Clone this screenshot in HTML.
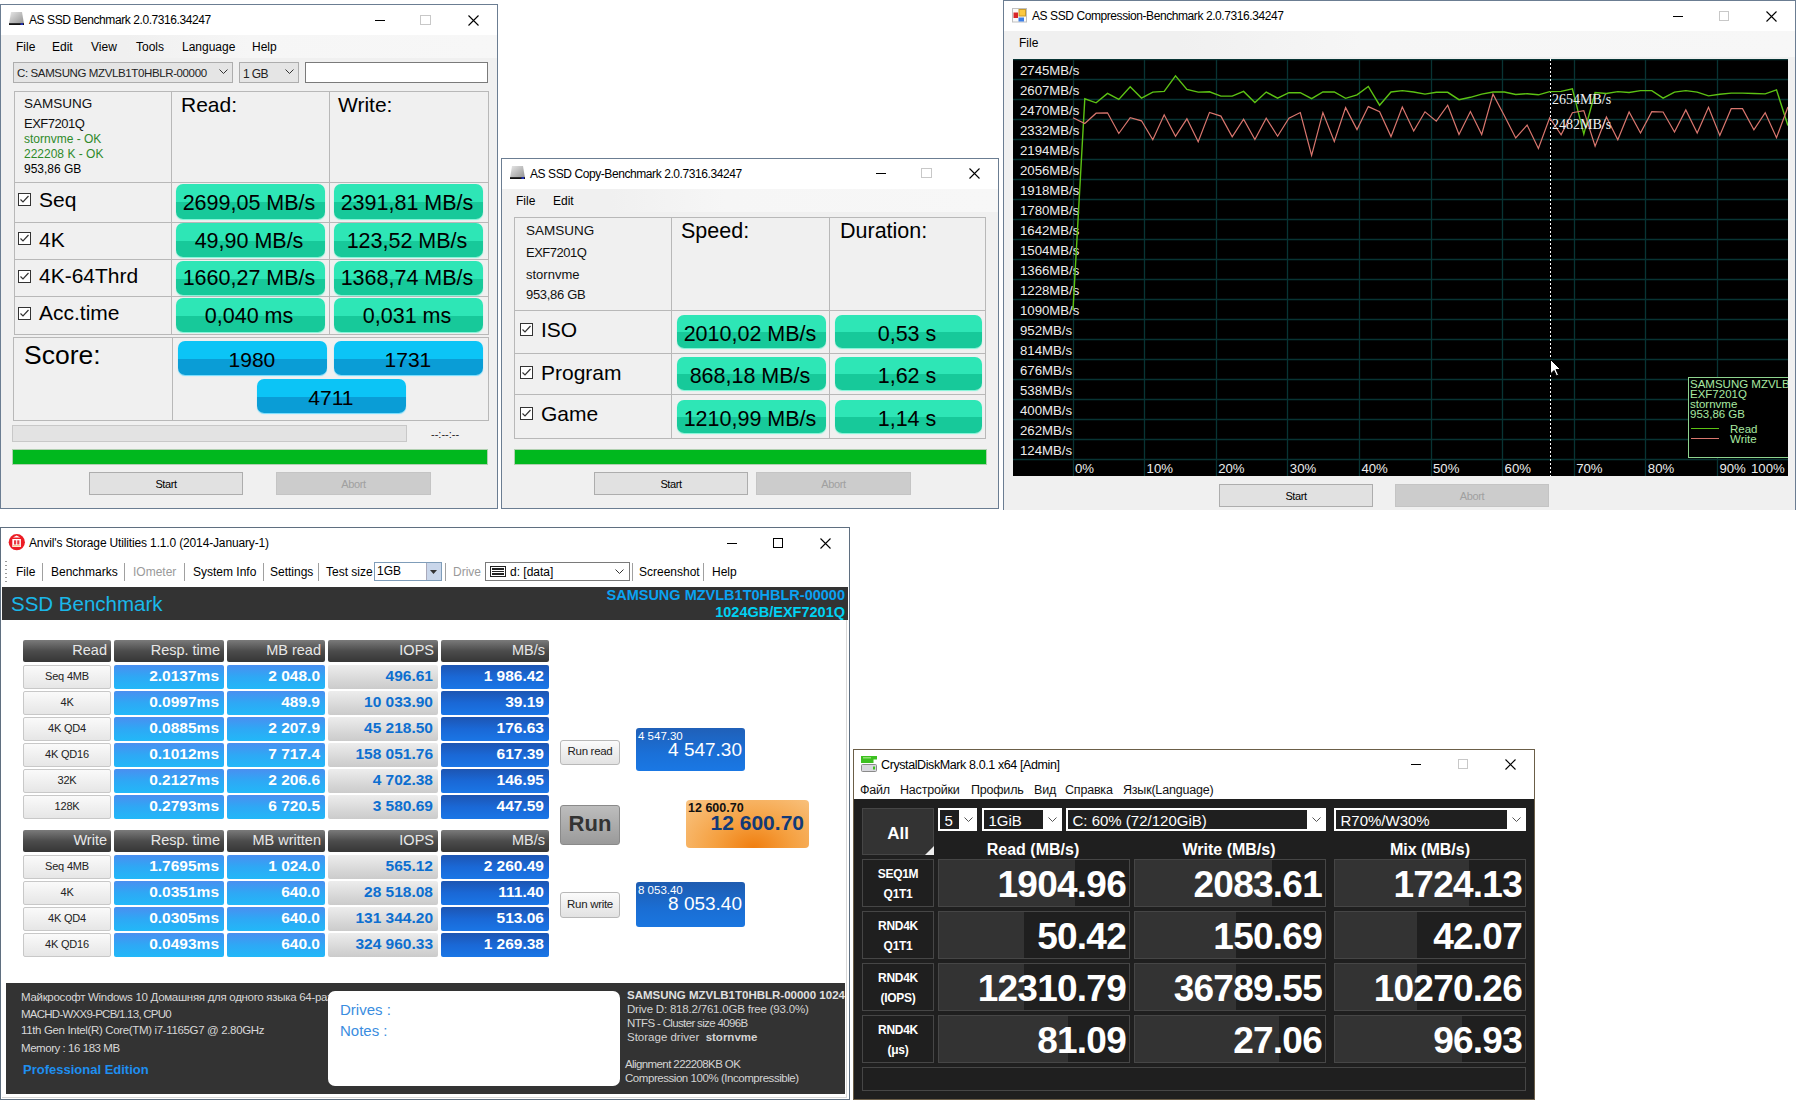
<!DOCTYPE html><html><head><meta charset="utf-8"><style>
html,body{margin:0;padding:0;background:#fff;font-family:"Liberation Sans",sans-serif;width:1796px;height:1100px;overflow:hidden;position:relative}
body div{position:absolute;box-sizing:border-box}
</style></head><body>
<div style="left:0px;top:4px;width:498px;height:505px;border:1px solid #6b7d92;background:#f0f0f0"></div>
<div style="left:1px;top:5px;width:496px;height:30px;background:#fff"></div>
<div style="left:1px;top:35px;width:496px;height:23px;background:linear-gradient(90deg,#f0f0f0 0,#f0f0f0 25%,#f6f6f6 50%,#f7f7f7 100%)"></div>
<svg style="position:absolute;left:9px;top:12px" width="16" height="14"><defs><linearGradient id="hd" x1="0" y1="0" x2="1" y2="1"><stop offset="0" stop-color="#e8e8e8"/><stop offset="1" stop-color="#909090"/></linearGradient></defs><path d="M2 0H13L15 12H0Z" fill="url(#hd)"/><rect x="0" y="11.2" width="15" height="1.8" fill="#111"/><rect x="11.5" y="11.2" width="2.5" height="1.8" fill="#2030c0"/></svg>
<div style="left:29px;top:13.84px;font-size:12px;line-height:12px;font-family:'Liberation Sans',sans-serif;white-space:nowrap;color:#000;letter-spacing:-0.42px">AS SSD Benchmark 2.0.7316.34247</div>
<div style="left:375px;top:19.5px;width:10px;height:1px;background:#000"></div>
<div style="left:420px;top:14.5px;width:11px;height:10px;border:1px solid #c8c8c8;box-sizing:border-box"></div>
<svg style="position:absolute;left:468px;top:14.5px" width="11" height="11"><path d="M0.5 0.5L10.5 10.5M10.5 0.5L0.5 10.5" stroke="#000" stroke-width="1.1"/></svg>
<div style="left:16px;top:40.84px;font-size:12px;line-height:12px;font-family:'Liberation Sans',sans-serif;white-space:nowrap;color:#000">File</div>
<div style="left:52px;top:40.84px;font-size:12px;line-height:12px;font-family:'Liberation Sans',sans-serif;white-space:nowrap;color:#000">Edit</div>
<div style="left:91px;top:40.84px;font-size:12px;line-height:12px;font-family:'Liberation Sans',sans-serif;white-space:nowrap;color:#000">View</div>
<div style="left:136px;top:40.84px;font-size:12px;line-height:12px;font-family:'Liberation Sans',sans-serif;white-space:nowrap;color:#000">Tools</div>
<div style="left:182px;top:40.84px;font-size:12px;line-height:12px;font-family:'Liberation Sans',sans-serif;white-space:nowrap;color:#000">Language</div>
<div style="left:252px;top:40.84px;font-size:12px;line-height:12px;font-family:'Liberation Sans',sans-serif;white-space:nowrap;color:#000">Help</div>
<div style="left:13px;top:62px;width:220px;height:21px;border:1px solid #adadad;background:#e5e5e5"></div>
<div style="left:17px;top:68.07px;font-size:11.5px;line-height:11.5px;font-family:'Liberation Sans',sans-serif;white-space:nowrap;color:#222;letter-spacing:-0.38px">C: SAMSUNG MZVLB1T0HBLR-00000</div>
<svg style="position:absolute;left:219px;top:69px" width="9" height="6"><path d="M0.5 0.5L4.5 4.5L8.5 0.5" stroke="#333" fill="none"/></svg>
<div style="left:239px;top:62px;width:60px;height:21px;border:1px solid #adadad;background:#e5e5e5"></div>
<div style="left:243px;top:67.64px;font-size:12px;line-height:12px;font-family:'Liberation Sans',sans-serif;white-space:nowrap;color:#222;letter-spacing:-0.6px">1 GB</div>
<svg style="position:absolute;left:285px;top:69px" width="9" height="6"><path d="M0.5 0.5L4.5 4.5L8.5 0.5" stroke="#333" fill="none"/></svg>
<div style="left:305px;top:62px;width:183px;height:21px;border:1px solid #7a7a7a;background:#fff"></div>
<div style="left:14px;top:91px;width:475px;height:244px;border:1px solid #b8b8b8"></div>
<div style="left:14px;top:182px;width:475px;height:1px;background:#b8b8b8"></div>
<div style="left:14px;top:222px;width:475px;height:1px;background:#b8b8b8"></div>
<div style="left:14px;top:259px;width:475px;height:1px;background:#b8b8b8"></div>
<div style="left:14px;top:296px;width:475px;height:1px;background:#b8b8b8"></div>
<div style="left:171px;top:91px;width:1px;height:244px;background:#b8b8b8"></div>
<div style="left:329px;top:91px;width:1px;height:244px;background:#b8b8b8"></div>
<div style="left:24px;top:96.57px;font-size:13.5px;line-height:13.5px;font-family:'Liberation Sans',sans-serif;white-space:nowrap;color:#111">SAMSUNG</div>
<div style="left:24px;top:117.00px;font-size:13px;line-height:13px;font-family:'Liberation Sans',sans-serif;white-space:nowrap;color:#111;letter-spacing:-0.5px">EXF7201Q</div>
<div style="left:24px;top:132.84px;font-size:12px;line-height:12px;font-family:'Liberation Sans',sans-serif;white-space:nowrap;color:#2f8a2a">stornvme - OK</div>
<div style="left:24px;top:147.84px;font-size:12px;line-height:12px;font-family:'Liberation Sans',sans-serif;white-space:nowrap;color:#2f8a2a">222208 K - OK</div>
<div style="left:24px;top:162.84px;font-size:12px;line-height:12px;font-family:'Liberation Sans',sans-serif;white-space:nowrap;">953,86 GB</div>
<div style="left:181px;top:94.22px;font-size:21px;line-height:21px;font-family:'Liberation Sans',sans-serif;white-space:nowrap;">Read:</div>
<div style="left:338px;top:94.22px;font-size:21px;line-height:21px;font-family:'Liberation Sans',sans-serif;white-space:nowrap;">Write:</div>
<svg style="position:absolute;left:18px;top:193px" width="13" height="13"><rect x="0.5" y="0.5" width="12" height="12" fill="#fff" stroke="#333"/><path d="M2.5 6.5L5 9L10.5 3" stroke="#333" stroke-width="1.2" fill="none"/></svg>
<div style="left:39px;top:189.22px;font-size:21px;line-height:21px;font-family:'Liberation Sans',sans-serif;white-space:nowrap;">Seq</div>
<div style="left:176px;top:184px;width:149px;height:35px;border-radius:7px;background:linear-gradient(#2ee6b6 0,#2ee6b6 52%,#17c99a 52%,#17c99a 100%);box-shadow:0 1px 1px #7cf5d6"></div>
<div style="left:154.5px;width:189px;top:193.20px;font-size:21.5px;line-height:21.5px;font-family:'Liberation Sans',sans-serif;white-space:nowrap;text-align:center;color:#000">2699,05 MB/s</div>
<div style="left:334px;top:184px;width:149px;height:35px;border-radius:7px;background:linear-gradient(#2ee6b6 0,#2ee6b6 52%,#17c99a 52%,#17c99a 100%);box-shadow:0 1px 1px #7cf5d6"></div>
<div style="left:312.5px;width:189px;top:193.20px;font-size:21.5px;line-height:21.5px;font-family:'Liberation Sans',sans-serif;white-space:nowrap;text-align:center;color:#000">2391,81 MB/s</div>
<svg style="position:absolute;left:18px;top:232px" width="13" height="13"><rect x="0.5" y="0.5" width="12" height="12" fill="#fff" stroke="#333"/><path d="M2.5 6.5L5 9L10.5 3" stroke="#333" stroke-width="1.2" fill="none"/></svg>
<div style="left:39px;top:229.22px;font-size:21px;line-height:21px;font-family:'Liberation Sans',sans-serif;white-space:nowrap;">4K</div>
<div style="left:176px;top:223px;width:149px;height:34px;border-radius:7px;background:linear-gradient(#2ee6b6 0,#2ee6b6 52%,#17c99a 52%,#17c99a 100%);box-shadow:0 1px 1px #7cf5d6"></div>
<div style="left:154.5px;width:189px;top:231.00px;font-size:21.5px;line-height:21.5px;font-family:'Liberation Sans',sans-serif;white-space:nowrap;text-align:center;color:#000">49,90 MB/s</div>
<div style="left:334px;top:223px;width:149px;height:34px;border-radius:7px;background:linear-gradient(#2ee6b6 0,#2ee6b6 52%,#17c99a 52%,#17c99a 100%);box-shadow:0 1px 1px #7cf5d6"></div>
<div style="left:312.5px;width:189px;top:231.00px;font-size:21.5px;line-height:21.5px;font-family:'Liberation Sans',sans-serif;white-space:nowrap;text-align:center;color:#000">123,52 MB/s</div>
<svg style="position:absolute;left:18px;top:270px" width="13" height="13"><rect x="0.5" y="0.5" width="12" height="12" fill="#fff" stroke="#333"/><path d="M2.5 6.5L5 9L10.5 3" stroke="#333" stroke-width="1.2" fill="none"/></svg>
<div style="left:39px;top:265.22px;font-size:21px;line-height:21px;font-family:'Liberation Sans',sans-serif;white-space:nowrap;">4K-64Thrd</div>
<div style="left:176px;top:261px;width:149px;height:34px;border-radius:7px;background:linear-gradient(#2ee6b6 0,#2ee6b6 52%,#17c99a 52%,#17c99a 100%);box-shadow:0 1px 1px #7cf5d6"></div>
<div style="left:154.5px;width:189px;top:268.10px;font-size:21.5px;line-height:21.5px;font-family:'Liberation Sans',sans-serif;white-space:nowrap;text-align:center;color:#000">1660,27 MB/s</div>
<div style="left:334px;top:261px;width:149px;height:34px;border-radius:7px;background:linear-gradient(#2ee6b6 0,#2ee6b6 52%,#17c99a 52%,#17c99a 100%);box-shadow:0 1px 1px #7cf5d6"></div>
<div style="left:312.5px;width:189px;top:268.10px;font-size:21.5px;line-height:21.5px;font-family:'Liberation Sans',sans-serif;white-space:nowrap;text-align:center;color:#000">1368,74 MB/s</div>
<svg style="position:absolute;left:18px;top:307px" width="13" height="13"><rect x="0.5" y="0.5" width="12" height="12" fill="#fff" stroke="#333"/><path d="M2.5 6.5L5 9L10.5 3" stroke="#333" stroke-width="1.2" fill="none"/></svg>
<div style="left:39px;top:302.22px;font-size:21px;line-height:21px;font-family:'Liberation Sans',sans-serif;white-space:nowrap;">Acc.time</div>
<div style="left:176px;top:298px;width:149px;height:34px;border-radius:7px;background:linear-gradient(#2ee6b6 0,#2ee6b6 52%,#17c99a 52%,#17c99a 100%);box-shadow:0 1px 1px #7cf5d6"></div>
<div style="left:154.5px;width:189px;top:305.50px;font-size:21.5px;line-height:21.5px;font-family:'Liberation Sans',sans-serif;white-space:nowrap;text-align:center;color:#000">0,040 ms</div>
<div style="left:334px;top:298px;width:149px;height:34px;border-radius:7px;background:linear-gradient(#2ee6b6 0,#2ee6b6 52%,#17c99a 52%,#17c99a 100%);box-shadow:0 1px 1px #7cf5d6"></div>
<div style="left:312.5px;width:189px;top:305.50px;font-size:21.5px;line-height:21.5px;font-family:'Liberation Sans',sans-serif;white-space:nowrap;text-align:center;color:#000">0,031 ms</div>
<div style="left:13px;top:337px;width:476px;height:84px;border:1px solid #b8b8b8"></div>
<div style="left:172px;top:337px;width:1px;height:84px;background:#b8b8b8"></div>
<div style="left:24px;top:341.57px;font-size:26.5px;line-height:26.5px;font-family:'Liberation Sans',sans-serif;white-space:nowrap;">Score:</div>
<div style="left:178px;top:341px;width:149px;height:34px;border-radius:7px;background:linear-gradient(#0cc4f6 0,#0cc4f6 52%,#0a9dd6 52%,#0a9dd6 100%);box-shadow:0 1px 1px #6fdcff"></div>
<div style="left:157.4px;width:189px;top:349.22px;font-size:21px;line-height:21px;font-family:'Liberation Sans',sans-serif;white-space:nowrap;text-align:center;color:#000">1980</div>
<div style="left:334px;top:341px;width:149px;height:34px;border-radius:7px;background:linear-gradient(#0cc4f6 0,#0cc4f6 52%,#0a9dd6 52%,#0a9dd6 100%);box-shadow:0 1px 1px #6fdcff"></div>
<div style="left:313.4px;width:189px;top:349.22px;font-size:21px;line-height:21px;font-family:'Liberation Sans',sans-serif;white-space:nowrap;text-align:center;color:#000">1731</div>
<div style="left:257px;top:379px;width:149px;height:34px;border-radius:7px;background:linear-gradient(#0cc4f6 0,#0cc4f6 52%,#0a9dd6 52%,#0a9dd6 100%);box-shadow:0 1px 1px #6fdcff"></div>
<div style="left:236.39999999999998px;width:189px;top:387.22px;font-size:21px;line-height:21px;font-family:'Liberation Sans',sans-serif;white-space:nowrap;text-align:center;color:#000">4711</div>
<div style="left:12px;top:425px;width:395px;height:17px;border:1px solid #c8c8c8;background:#e3e3e3"></div>
<div style="left:431px;top:428.69px;font-size:11px;line-height:11px;font-family:'Liberation Sans',sans-serif;white-space:nowrap;color:#222">--:--:--</div>
<div style="left:12px;top:449px;width:476px;height:16px;background:#00b81e;border:1px solid #b0d0b0"></div>
<div style="left:89px;top:472px;width:154px;height:23px;background:#e1e1e1;border:1px solid #adadad"></div>
<div style="left:89.0px;width:154px;top:478.69px;font-size:11px;line-height:11px;font-family:'Liberation Sans',sans-serif;white-space:nowrap;text-align:center;color:#000;letter-spacing:-0.4px">Start</div>
<div style="left:276px;top:472px;width:155px;height:23px;background:#cccccc;border:1px solid #c4c4c4"></div>
<div style="left:276.0px;width:155px;top:478.69px;font-size:11px;line-height:11px;font-family:'Liberation Sans',sans-serif;white-space:nowrap;text-align:center;color:#a0a0a0;letter-spacing:-0.4px">Abort</div>
<div style="left:501px;top:158px;width:498px;height:351px;border:1px solid #6b7d92;background:#f0f0f0"></div>
<div style="left:502px;top:159px;width:496px;height:30px;background:#fff"></div>
<div style="left:502px;top:189px;width:496px;height:23px;background:linear-gradient(90deg,#f0f0f0 0,#f0f0f0 22%,#f6f6f6 45%,#f7f7f7 100%)"></div>
<svg style="position:absolute;left:510px;top:166px" width="16" height="14"><path d="M2 0H13L15 12H0Z" fill="url(#hd)"/><rect x="0" y="11.2" width="15" height="1.8" fill="#111"/><rect x="11.5" y="11.2" width="2.5" height="1.8" fill="#2030c0"/></svg>
<div style="left:530px;top:167.84px;font-size:12px;line-height:12px;font-family:'Liberation Sans',sans-serif;white-space:nowrap;color:#000;letter-spacing:-0.42px">AS SSD Copy-Benchmark 2.0.7316.34247</div>
<div style="left:876px;top:173px;width:10px;height:1px;background:#000"></div>
<div style="left:921px;top:168px;width:11px;height:10px;border:1px solid #c8c8c8;box-sizing:border-box"></div>
<svg style="position:absolute;left:969px;top:168px" width="11" height="11"><path d="M0.5 0.5L10.5 10.5M10.5 0.5L0.5 10.5" stroke="#000" stroke-width="1.1"/></svg>
<div style="left:516px;top:194.84px;font-size:12px;line-height:12px;font-family:'Liberation Sans',sans-serif;white-space:nowrap;">File</div>
<div style="left:553px;top:194.84px;font-size:12px;line-height:12px;font-family:'Liberation Sans',sans-serif;white-space:nowrap;">Edit</div>
<div style="left:514px;top:217px;width:472px;height:222px;border:1px solid #b8b8b8"></div>
<div style="left:514px;top:310px;width:472px;height:1px;background:#b8b8b8"></div>
<div style="left:514px;top:353px;width:472px;height:1px;background:#b8b8b8"></div>
<div style="left:514px;top:394px;width:472px;height:1px;background:#b8b8b8"></div>
<div style="left:671px;top:217px;width:1px;height:222px;background:#b8b8b8"></div>
<div style="left:829px;top:217px;width:1px;height:222px;background:#b8b8b8"></div>
<div style="left:526px;top:223.57px;font-size:13.5px;line-height:13.5px;font-family:'Liberation Sans',sans-serif;white-space:nowrap;color:#111">SAMSUNG</div>
<div style="left:526px;top:246.00px;font-size:13px;line-height:13px;font-family:'Liberation Sans',sans-serif;white-space:nowrap;color:#111;letter-spacing:-0.5px">EXF7201Q</div>
<div style="left:526px;top:268.00px;font-size:13px;line-height:13px;font-family:'Liberation Sans',sans-serif;white-space:nowrap;color:#111">stornvme</div>
<div style="left:526px;top:288.00px;font-size:13px;line-height:13px;font-family:'Liberation Sans',sans-serif;white-space:nowrap;color:#111;letter-spacing:-0.3px">953,86 GB</div>
<div style="left:681px;top:220.80px;font-size:21.5px;line-height:21.5px;font-family:'Liberation Sans',sans-serif;white-space:nowrap;">Speed:</div>
<div style="left:840px;top:220.80px;font-size:21.5px;line-height:21.5px;font-family:'Liberation Sans',sans-serif;white-space:nowrap;">Duration:</div>
<svg style="position:absolute;left:520px;top:323px" width="13" height="13"><rect x="0.5" y="0.5" width="12" height="12" fill="#fff" stroke="#333"/><path d="M2.5 6.5L5 9L10.5 3" stroke="#333" stroke-width="1.2" fill="none"/></svg>
<div style="left:541px;top:319.22px;font-size:21px;line-height:21px;font-family:'Liberation Sans',sans-serif;white-space:nowrap;">ISO</div>
<div style="left:677px;top:315px;width:149px;height:33px;border-radius:7px;background:linear-gradient(#2ee6b6 0,#2ee6b6 52%,#17c99a 52%,#17c99a 100%);box-shadow:0 1px 1px #7cf5d6"></div>
<div style="left:655.5px;width:189px;top:324.20px;font-size:21.5px;line-height:21.5px;font-family:'Liberation Sans',sans-serif;white-space:nowrap;text-align:center;color:#000">2010,02 MB/s</div>
<div style="left:835px;top:315px;width:147px;height:33px;border-radius:7px;background:linear-gradient(#2ee6b6 0,#2ee6b6 52%,#17c99a 52%,#17c99a 100%);box-shadow:0 1px 1px #7cf5d6"></div>
<div style="left:813.5px;width:187px;top:324.20px;font-size:21.5px;line-height:21.5px;font-family:'Liberation Sans',sans-serif;white-space:nowrap;text-align:center;color:#000">0,53 s</div>
<svg style="position:absolute;left:520px;top:366px" width="13" height="13"><rect x="0.5" y="0.5" width="12" height="12" fill="#fff" stroke="#333"/><path d="M2.5 6.5L5 9L10.5 3" stroke="#333" stroke-width="1.2" fill="none"/></svg>
<div style="left:541px;top:362.22px;font-size:21px;line-height:21px;font-family:'Liberation Sans',sans-serif;white-space:nowrap;">Program</div>
<div style="left:677px;top:357px;width:149px;height:33px;border-radius:7px;background:linear-gradient(#2ee6b6 0,#2ee6b6 52%,#17c99a 52%,#17c99a 100%);box-shadow:0 1px 1px #7cf5d6"></div>
<div style="left:655.5px;width:189px;top:365.90px;font-size:21.5px;line-height:21.5px;font-family:'Liberation Sans',sans-serif;white-space:nowrap;text-align:center;color:#000">868,18 MB/s</div>
<div style="left:835px;top:357px;width:147px;height:33px;border-radius:7px;background:linear-gradient(#2ee6b6 0,#2ee6b6 52%,#17c99a 52%,#17c99a 100%);box-shadow:0 1px 1px #7cf5d6"></div>
<div style="left:813.5px;width:187px;top:365.90px;font-size:21.5px;line-height:21.5px;font-family:'Liberation Sans',sans-serif;white-space:nowrap;text-align:center;color:#000">1,62 s</div>
<svg style="position:absolute;left:520px;top:407px" width="13" height="13"><rect x="0.5" y="0.5" width="12" height="12" fill="#fff" stroke="#333"/><path d="M2.5 6.5L5 9L10.5 3" stroke="#333" stroke-width="1.2" fill="none"/></svg>
<div style="left:541px;top:403.22px;font-size:21px;line-height:21px;font-family:'Liberation Sans',sans-serif;white-space:nowrap;">Game</div>
<div style="left:677px;top:400px;width:149px;height:33px;border-radius:7px;background:linear-gradient(#2ee6b6 0,#2ee6b6 52%,#17c99a 52%,#17c99a 100%);box-shadow:0 1px 1px #7cf5d6"></div>
<div style="left:655.5px;width:189px;top:409.20px;font-size:21.5px;line-height:21.5px;font-family:'Liberation Sans',sans-serif;white-space:nowrap;text-align:center;color:#000">1210,99 MB/s</div>
<div style="left:835px;top:400px;width:147px;height:33px;border-radius:7px;background:linear-gradient(#2ee6b6 0,#2ee6b6 52%,#17c99a 52%,#17c99a 100%);box-shadow:0 1px 1px #7cf5d6"></div>
<div style="left:813.5px;width:187px;top:409.20px;font-size:21.5px;line-height:21.5px;font-family:'Liberation Sans',sans-serif;white-space:nowrap;text-align:center;color:#000">1,14 s</div>
<div style="left:514px;top:449px;width:473px;height:16px;background:#00b81e;border:1px solid #b0d0b0"></div>
<div style="left:594px;top:472px;width:154px;height:23px;background:#e1e1e1;border:1px solid #adadad"></div>
<div style="left:594.0px;width:154px;top:478.69px;font-size:11px;line-height:11px;font-family:'Liberation Sans',sans-serif;white-space:nowrap;text-align:center;color:#000;letter-spacing:-0.4px">Start</div>
<div style="left:756px;top:472px;width:155px;height:23px;background:#cccccc;border:1px solid #c4c4c4"></div>
<div style="left:756.0px;width:155px;top:478.69px;font-size:11px;line-height:11px;font-family:'Liberation Sans',sans-serif;white-space:nowrap;text-align:center;color:#a0a0a0;letter-spacing:-0.4px">Abort</div>
<div style="left:1003px;top:0px;width:793px;height:510px;border:1px solid #6b7d92;border-bottom:none;background:#f0f0f0"></div>
<div style="left:1004px;top:1px;width:791px;height:30px;background:#fff"></div>
<div style="left:1004px;top:31px;width:791px;height:26px;background:linear-gradient(90deg,#f0f0f0 0,#f0f0f0 22%,#f6f6f6 45%,#f7f7f7 100%)"></div>
<svg style="position:absolute;left:1012px;top:8px" width="15" height="15"><rect x="0.5" y="0.5" width="14" height="13.5" fill="#fafafa" stroke="#c0c0c0"/><rect x="1.5" y="4.5" width="4.5" height="5.5" fill="#d8262a"/><rect x="6.5" y="1" width="7.5" height="7.5" fill="#c89a2a"/><rect x="7.5" y="2" width="5.5" height="5.5" fill="#fcc840"/><rect x="6.5" y="9.5" width="5.5" height="4" fill="#3d7fe6"/></svg>
<div style="left:1032px;top:9.84px;font-size:12px;line-height:12px;font-family:'Liberation Sans',sans-serif;white-space:nowrap;color:#000;letter-spacing:-0.42px">AS SSD Compression-Benchmark 2.0.7316.34247</div>
<div style="left:1673px;top:15.5px;width:10px;height:1px;background:#000"></div>
<div style="left:1719px;top:10.5px;width:10px;height:10px;border:1px solid #c8c8c8;box-sizing:border-box"></div>
<svg style="position:absolute;left:1766px;top:10.5px" width="11" height="11"><path d="M0.5 0.5L10.5 10.5M10.5 0.5L0.5 10.5" stroke="#000" stroke-width="1.1"/></svg>
<div style="left:1019px;top:36.84px;font-size:12px;line-height:12px;font-family:'Liberation Sans',sans-serif;white-space:nowrap;">File</div>
<div style="left:1013px;top:59px;width:775px;height:417px;background:#000"></div>
<svg style="position:absolute;left:1013px;top:59px" width="775" height="417" viewBox="1013 59 775 417"><line x1="1013" y1="59.5" x2="1788" y2="59.5" stroke="#083434" stroke-width="1.3"/><line x1="1013" y1="79.5" x2="1788" y2="79.5" stroke="#083434" stroke-width="1.3"/><line x1="1013" y1="99.5" x2="1788" y2="99.5" stroke="#083434" stroke-width="1.3"/><line x1="1013" y1="119.5" x2="1788" y2="119.5" stroke="#083434" stroke-width="1.3"/><line x1="1013" y1="139.5" x2="1788" y2="139.5" stroke="#083434" stroke-width="1.3"/><line x1="1013" y1="159.5" x2="1788" y2="159.5" stroke="#083434" stroke-width="1.3"/><line x1="1013" y1="179.5" x2="1788" y2="179.5" stroke="#083434" stroke-width="1.3"/><line x1="1013" y1="199.5" x2="1788" y2="199.5" stroke="#083434" stroke-width="1.3"/><line x1="1013" y1="219.5" x2="1788" y2="219.5" stroke="#083434" stroke-width="1.3"/><line x1="1013" y1="239.5" x2="1788" y2="239.5" stroke="#083434" stroke-width="1.3"/><line x1="1013" y1="259.5" x2="1788" y2="259.5" stroke="#083434" stroke-width="1.3"/><line x1="1013" y1="279.5" x2="1788" y2="279.5" stroke="#083434" stroke-width="1.3"/><line x1="1013" y1="299.5" x2="1788" y2="299.5" stroke="#083434" stroke-width="1.3"/><line x1="1013" y1="319.5" x2="1788" y2="319.5" stroke="#083434" stroke-width="1.3"/><line x1="1013" y1="339.5" x2="1788" y2="339.5" stroke="#083434" stroke-width="1.3"/><line x1="1013" y1="359.5" x2="1788" y2="359.5" stroke="#083434" stroke-width="1.3"/><line x1="1013" y1="379.5" x2="1788" y2="379.5" stroke="#083434" stroke-width="1.3"/><line x1="1013" y1="399.5" x2="1788" y2="399.5" stroke="#083434" stroke-width="1.3"/><line x1="1013" y1="419.5" x2="1788" y2="419.5" stroke="#083434" stroke-width="1.3"/><line x1="1013" y1="439.5" x2="1788" y2="439.5" stroke="#083434" stroke-width="1.3"/><line x1="1013" y1="459.5" x2="1788" y2="459.5" stroke="#083434" stroke-width="1.3"/><line x1="1073.5" y1="59" x2="1073.5" y2="476" stroke="#083434" stroke-width="1.3"/><line x1="1144.5" y1="59" x2="1144.5" y2="476" stroke="#083434" stroke-width="1.3"/><line x1="1216.5" y1="59" x2="1216.5" y2="476" stroke="#083434" stroke-width="1.3"/><line x1="1287.5" y1="59" x2="1287.5" y2="476" stroke="#083434" stroke-width="1.3"/><line x1="1359.5" y1="59" x2="1359.5" y2="476" stroke="#083434" stroke-width="1.3"/><line x1="1431.5" y1="59" x2="1431.5" y2="476" stroke="#083434" stroke-width="1.3"/><line x1="1502.5" y1="59" x2="1502.5" y2="476" stroke="#083434" stroke-width="1.3"/><line x1="1574.5" y1="59" x2="1574.5" y2="476" stroke="#083434" stroke-width="1.3"/><line x1="1645.5" y1="59" x2="1645.5" y2="476" stroke="#083434" stroke-width="1.3"/><line x1="1717.5" y1="59" x2="1717.5" y2="476" stroke="#083434" stroke-width="1.3"/><text x="1020" y="74.5" font-family="Liberation Sans" font-size="13.2" fill="#ececec">2745MB/s</text><text x="1020" y="94.5" font-family="Liberation Sans" font-size="13.2" fill="#ececec">2607MB/s</text><text x="1020" y="114.5" font-family="Liberation Sans" font-size="13.2" fill="#ececec">2470MB/s</text><text x="1020" y="134.5" font-family="Liberation Sans" font-size="13.2" fill="#ececec">2332MB/s</text><text x="1020" y="154.5" font-family="Liberation Sans" font-size="13.2" fill="#ececec">2194MB/s</text><text x="1020" y="174.5" font-family="Liberation Sans" font-size="13.2" fill="#ececec">2056MB/s</text><text x="1020" y="194.5" font-family="Liberation Sans" font-size="13.2" fill="#ececec">1918MB/s</text><text x="1020" y="214.5" font-family="Liberation Sans" font-size="13.2" fill="#ececec">1780MB/s</text><text x="1020" y="234.5" font-family="Liberation Sans" font-size="13.2" fill="#ececec">1642MB/s</text><text x="1020" y="254.5" font-family="Liberation Sans" font-size="13.2" fill="#ececec">1504MB/s</text><text x="1020" y="274.5" font-family="Liberation Sans" font-size="13.2" fill="#ececec">1366MB/s</text><text x="1020" y="294.5" font-family="Liberation Sans" font-size="13.2" fill="#ececec">1228MB/s</text><text x="1020" y="314.5" font-family="Liberation Sans" font-size="13.2" fill="#ececec">1090MB/s</text><text x="1020" y="334.5" font-family="Liberation Sans" font-size="13.2" fill="#ececec">952MB/s</text><text x="1020" y="354.5" font-family="Liberation Sans" font-size="13.2" fill="#ececec">814MB/s</text><text x="1020" y="374.5" font-family="Liberation Sans" font-size="13.2" fill="#ececec">676MB/s</text><text x="1020" y="394.5" font-family="Liberation Sans" font-size="13.2" fill="#ececec">538MB/s</text><text x="1020" y="414.5" font-family="Liberation Sans" font-size="13.2" fill="#ececec">400MB/s</text><text x="1020" y="434.5" font-family="Liberation Sans" font-size="13.2" fill="#ececec">262MB/s</text><text x="1020" y="454.5" font-family="Liberation Sans" font-size="13.2" fill="#ececec">124MB/s</text><text x="1075.0" y="473" font-family="Liberation Sans" font-size="13.2" fill="#ececec">0%</text><text x="1146.6" y="473" font-family="Liberation Sans" font-size="13.2" fill="#ececec">10%</text><text x="1218.2" y="473" font-family="Liberation Sans" font-size="13.2" fill="#ececec">20%</text><text x="1289.8" y="473" font-family="Liberation Sans" font-size="13.2" fill="#ececec">30%</text><text x="1361.4" y="473" font-family="Liberation Sans" font-size="13.2" fill="#ececec">40%</text><text x="1433.0" y="473" font-family="Liberation Sans" font-size="13.2" fill="#ececec">50%</text><text x="1504.6" y="473" font-family="Liberation Sans" font-size="13.2" fill="#ececec">60%</text><text x="1576.1999999999998" y="473" font-family="Liberation Sans" font-size="13.2" fill="#ececec">70%</text><text x="1647.8" y="473" font-family="Liberation Sans" font-size="13.2" fill="#ececec">80%</text><text x="1719.4" y="473" font-family="Liberation Sans" font-size="13.2" fill="#ececec">90%</text><text x="1751" y="473" font-family="Liberation Sans" font-size="13.2" fill="#ececec">100%</text><line x1="1550.5" y1="59" x2="1550.5" y2="476" stroke="#fff" stroke-width="1" stroke-dasharray="2 2"/><polyline points="1073.0,310 1084.8,98.75 1096.1,102.8 1107.5,93.4 1118.8,99.4 1130.2,86.7 1141.5,98.1 1152.8,92.1 1164.2,91.4 1175.5,75.8 1186.9,89.4 1198.2,92.1 1209.5,91.8 1220.9,96.1 1232.2,96.1 1243.6,91.4 1254.9,102.5 1266.2,92.1 1277.6,98.1 1288.9,92.7 1300.3,92.7 1311.6,98.7 1322.9,92.0 1334.3,92.0 1345.6,98.3 1357.0,94.8 1368.3,86.4 1379.6,105.2 1391.0,92.0 1402.3,90.6 1413.7,92.0 1425.0,94.1 1436.3,92.3 1447.7,92.3 1459.0,99.7 1470.4,97.3 1481.7,94.1 1493.0,92.0 1504.4,92.0 1515.7,94.5 1527.1,93.7 1538.4,94.8 1549.7,91.6 1561.1,91.4 1572.4,88.8 1583.8,134.1 1595.1,92.5 1606.4,93.5 1617.8,91.6 1629.1,92.5 1640.5,90.6 1651.8,90.6 1663.1,98.2 1674.5,92.1 1685.8,90.6 1697.2,92.1 1708.5,95.9 1719.8,94.2 1731.2,93.1 1742.5,93.1 1753.9,93.5 1765.2,93.9 1776.5,89.9 1787.9,125.6" fill="none" stroke="#5cc214" stroke-width="1.4"/><polyline points="1073.0,117.7 1084.8,123.5 1096.1,113.2 1107.5,112.8 1118.8,133.5 1130.2,117.7 1141.5,120.8 1152.8,139.8 1164.2,114.8 1175.5,136.4 1186.9,118.8 1198.2,141.8 1209.5,112.4 1220.9,116.1 1232.2,136.8 1243.6,119.1 1254.9,139.5 1266.2,118.1 1277.6,136.2 1288.9,118.1 1300.3,112.5 1311.6,155.4 1322.9,112.6 1334.3,141.4 1345.6,107.6 1357.0,129.6 1368.3,106.6 1379.6,111.8 1391.0,136.6 1402.3,107.0 1413.7,131.0 1425.0,111.8 1436.3,121.2 1447.7,105.2 1459.0,134.5 1470.4,111.5 1481.7,134.5 1493.0,94.1 1504.4,115.7 1515.7,138.0 1527.1,125.1 1538.4,148.4 1549.7,117.7 1561.1,134.8 1572.4,112.7 1583.8,110.6 1595.1,146.2 1606.4,117.0 1617.8,139.8 1629.1,112.0 1640.5,133.0 1651.8,111.6 1663.1,112.0 1674.5,132.0 1685.8,109.9 1697.2,133.0 1708.5,107.3 1719.8,135.5 1731.2,108.7 1742.5,108.7 1753.9,129.8 1765.2,112.7 1776.5,137.7 1787.9,107.0" fill="none" stroke="#d9766e" stroke-width="1.2"/><text x="1552" y="104" font-family="Liberation Serif" font-size="14" fill="#f0f0f0">2654MB/s</text><text x="1552" y="129" font-family="Liberation Serif" font-size="14" fill="#f0f0f0">2482MB/s</text><rect x="1688.5" y="377.5" width="110" height="80" fill="#000" stroke="#8fd48f" stroke-width="1"/><text x="1690" y="388" font-family="Liberation Sans" font-size="11.5" fill="#a8e8a0">SAMSUNG MZVLB1T0HBLR</text><text x="1690" y="398" font-family="Liberation Sans" font-size="11.5" fill="#a8e8a0">EXF7201Q</text><text x="1690" y="408" font-family="Liberation Sans" font-size="11.5" fill="#a8e8a0">stornvme</text><text x="1690" y="418" font-family="Liberation Sans" font-size="11.5" fill="#a8e8a0">953,86 GB</text><line x1="1691" y1="428.5" x2="1719" y2="428.5" stroke="#5cc214" stroke-width="1"/><line x1="1691" y1="438.5" x2="1719" y2="438.5" stroke="#d9766e" stroke-width="1"/><text x="1730" y="433" font-family="Liberation Sans" font-size="11.5" fill="#a8e8a0">Read</text><text x="1730" y="443" font-family="Liberation Sans" font-size="11.5" fill="#a8e8a0">Write</text><path d="M1550.5 359.5 L1550.5 374 L1554 370.5 L1556.5 376 L1558.5 375 L1556 369.5 L1560.5 369.5 Z" fill="#fff" stroke="#000" stroke-width="1"/></svg>
<div style="left:1219px;top:484px;width:154px;height:23px;background:#e1e1e1;border:1px solid #adadad"></div>
<div style="left:1219.0px;width:154px;top:490.69px;font-size:11px;line-height:11px;font-family:'Liberation Sans',sans-serif;white-space:nowrap;text-align:center;color:#000;letter-spacing:-0.4px">Start</div>
<div style="left:1395px;top:484px;width:154px;height:23px;background:#cccccc;border:1px solid #c4c4c4"></div>
<div style="left:1395.0px;width:154px;top:490.69px;font-size:11px;line-height:11px;font-family:'Liberation Sans',sans-serif;white-space:nowrap;text-align:center;color:#a0a0a0;letter-spacing:-0.4px">Abort</div>
<div style="left:0px;top:527px;width:850px;height:573px;border:1px solid #5f6f80;background:#fff"></div>
<svg style="position:absolute;left:8px;top:534px" width="18" height="18"><circle cx="8.8" cy="8.2" r="8.1" fill="#ec1c24"/><path d="M5 3.6L8.6 1.4L12.2 3.6Z" fill="#fff"/><rect x="4.3" y="5" width="8.6" height="8" fill="#fff"/><rect x="6" y="6.3" width="2.2" height="4.2" fill="#e83a40"/><rect x="9.2" y="6.3" width="2.2" height="4.2" fill="#e83a40"/><rect x="5" y="11.3" width="7.2" height="1" fill="#f5b060"/></svg>
<div style="left:29px;top:536.84px;font-size:12px;line-height:12px;font-family:'Liberation Sans',sans-serif;white-space:nowrap;color:#000;letter-spacing:-0.15px">Anvil's Storage Utilities 1.1.0 (2014-January-1)</div>
<div style="left:727px;top:543px;width:10px;height:1px;background:#000"></div>
<div style="left:773px;top:538px;width:10px;height:10px;border:1px solid #000;box-sizing:border-box"></div>
<svg style="position:absolute;left:820px;top:538px" width="11" height="11"><path d="M0.5 0.5L10.5 10.5M10.5 0.5L0.5 10.5" stroke="#000" stroke-width="1.1"/></svg>
<div style="left:5px;top:561px;width:2px;height:22px;background:repeating-linear-gradient(#999 0,#999 1px,transparent 1px,transparent 4px)"></div>
<div style="left:42px;top:563px;width:1px;height:18px;background:#a0a0a0"></div>
<div style="left:124px;top:563px;width:1px;height:18px;background:#a0a0a0"></div>
<div style="left:184px;top:563px;width:1px;height:18px;background:#a0a0a0"></div>
<div style="left:263px;top:563px;width:1px;height:18px;background:#a0a0a0"></div>
<div style="left:318px;top:563px;width:1px;height:18px;background:#a0a0a0"></div>
<div style="left:445px;top:563px;width:1px;height:18px;background:#a0a0a0"></div>
<div style="left:632px;top:563px;width:1px;height:18px;background:#a0a0a0"></div>
<div style="left:703px;top:563px;width:1px;height:18px;background:#a0a0a0"></div>
<div style="left:16px;top:565.84px;font-size:12px;line-height:12px;font-family:'Liberation Sans',sans-serif;white-space:nowrap;color:#000">File</div>
<div style="left:51px;top:565.84px;font-size:12px;line-height:12px;font-family:'Liberation Sans',sans-serif;white-space:nowrap;color:#000">Benchmarks</div>
<div style="left:133px;top:565.84px;font-size:12px;line-height:12px;font-family:'Liberation Sans',sans-serif;white-space:nowrap;color:#9a9a9a">IOmeter</div>
<div style="left:193px;top:565.84px;font-size:12px;line-height:12px;font-family:'Liberation Sans',sans-serif;white-space:nowrap;color:#000">System Info</div>
<div style="left:270px;top:565.84px;font-size:12px;line-height:12px;font-family:'Liberation Sans',sans-serif;white-space:nowrap;color:#000">Settings</div>
<div style="left:326px;top:565.84px;font-size:12px;line-height:12px;font-family:'Liberation Sans',sans-serif;white-space:nowrap;color:#000">Test size</div>
<div style="left:453px;top:565.84px;font-size:12px;line-height:12px;font-family:'Liberation Sans',sans-serif;white-space:nowrap;color:#9a9a9a">Drive</div>
<div style="left:639px;top:565.84px;font-size:12px;line-height:12px;font-family:'Liberation Sans',sans-serif;white-space:nowrap;color:#000">Screenshot</div>
<div style="left:712px;top:565.84px;font-size:12px;line-height:12px;font-family:'Liberation Sans',sans-serif;white-space:nowrap;color:#000">Help</div>
<div style="left:374px;top:562px;width:68px;height:19px;border:1px solid #7f9db9;background:#fff"></div>
<div style="left:377px;top:564.84px;font-size:12px;line-height:12px;font-family:'Liberation Sans',sans-serif;white-space:nowrap;">1GB</div>
<div style="left:426px;top:563px;width:15px;height:17px;background:#c9d6ea;border-left:1px solid #aab"></div>
<svg style="position:absolute;left:430px;top:570px" width="7" height="4"><path d="M0 0H7L3.5 4Z" fill="#333"/></svg>
<div style="left:485px;top:562px;width:145px;height:19px;border:1px solid #7a7a7a;background:#fff"></div>
<svg style="position:absolute;left:490px;top:566px" width="16" height="11"><rect x="0.5" y="0.5" width="15" height="10" fill="#fff" stroke="#222"/><rect x="2" y="2" width="12" height="2" fill="#222"/><rect x="2" y="5" width="12" height="1" fill="#222"/><rect x="2" y="7" width="12" height="2" fill="#222"/></svg>
<div style="left:510px;top:565.84px;font-size:12px;line-height:12px;font-family:'Liberation Sans',sans-serif;white-space:nowrap;">d: [data]</div>
<svg style="position:absolute;left:615px;top:569px" width="9" height="6"><path d="M0.5 0.5L4.5 4.5L8.5 0.5" stroke="#333" fill="none"/></svg>
<div style="left:2px;top:587px;width:846px;height:33px;background:#333333"></div>
<div style="left:11px;top:593.65px;font-size:20.5px;line-height:20.5px;font-family:'Liberation Sans',sans-serif;white-space:nowrap;color:#1ab8ea">SSD Benchmark</div>
<div style="right:951px;top:587.73px;font-size:14.5px;line-height:14.5px;font-family:'Liberation Sans',sans-serif;white-space:nowrap;text-align:right;color:#0aa2f2;font-weight:bold">SAMSUNG MZVLB1T0HBLR-00000</div>
<div style="right:951px;top:604.73px;font-size:14.5px;line-height:14.5px;font-family:'Liberation Sans',sans-serif;white-space:nowrap;text-align:right;color:#00d2f4;font-weight:bold">1024GB/EXF7201Q</div>
<div style="left:846px;top:620px;width:1px;height:478px;background:#d8d8d8"></div>
<div style="left:2px;top:1097px;width:845px;height:1px;background:#d8d8d8"></div>
<div style="left:23px;top:640px;width:88px;height:22px;border-radius:2px;background:linear-gradient(#7a7a7a,#4c4c4c 50%,#363636)"></div>
<div style="right:1689px;top:642.93px;font-size:14.5px;line-height:14.5px;font-family:'Liberation Sans',sans-serif;white-space:nowrap;text-align:right;color:#e8e8e8">Read</div>
<div style="left:114px;top:640px;width:110px;height:22px;border-radius:2px;background:linear-gradient(#7a7a7a,#4c4c4c 50%,#363636)"></div>
<div style="right:1576px;top:642.93px;font-size:14.5px;line-height:14.5px;font-family:'Liberation Sans',sans-serif;white-space:nowrap;text-align:right;color:#e8e8e8">Resp. time</div>
<div style="left:227px;top:640px;width:98px;height:22px;border-radius:2px;background:linear-gradient(#7a7a7a,#4c4c4c 50%,#363636)"></div>
<div style="right:1475px;top:642.93px;font-size:14.5px;line-height:14.5px;font-family:'Liberation Sans',sans-serif;white-space:nowrap;text-align:right;color:#e8e8e8">MB read</div>
<div style="left:328px;top:640px;width:110px;height:22px;border-radius:2px;background:linear-gradient(#7a7a7a,#4c4c4c 50%,#363636)"></div>
<div style="right:1362px;top:642.93px;font-size:14.5px;line-height:14.5px;font-family:'Liberation Sans',sans-serif;white-space:nowrap;text-align:right;color:#e8e8e8">IOPS</div>
<div style="left:441px;top:640px;width:108px;height:22px;border-radius:2px;background:linear-gradient(#7a7a7a,#4c4c4c 50%,#363636)"></div>
<div style="right:1251px;top:642.93px;font-size:14.5px;line-height:14.5px;font-family:'Liberation Sans',sans-serif;white-space:nowrap;text-align:right;color:#e8e8e8">MB/s</div>
<div style="left:23px;top:665px;width:88px;height:24px;border:1px solid #c8c8c8;border-radius:2px;background:linear-gradient(#fafafa,#e6e6e6)"></div>
<div style="left:23.0px;width:88px;top:670.69px;font-size:11px;line-height:11px;font-family:'Liberation Sans',sans-serif;white-space:nowrap;text-align:center;color:#222;letter-spacing:-0.2px">Seq 4MB</div>
<div style="left:114px;top:665px;width:110px;height:24px;border-radius:2px;background:linear-gradient(#4a8ff0,#2ea8f5 50%,#22b8f8)"></div>
<div style="right:1577px;top:668.38px;font-size:15.5px;line-height:15.5px;font-family:'Liberation Sans',sans-serif;white-space:nowrap;text-align:right;color:#fff;font-weight:bold">2.0137ms</div>
<div style="left:227px;top:665px;width:98px;height:24px;border-radius:2px;background:linear-gradient(#4a8ff0,#2ea8f5 50%,#22b8f8)"></div>
<div style="right:1476px;top:668.38px;font-size:15.5px;line-height:15.5px;font-family:'Liberation Sans',sans-serif;white-space:nowrap;text-align:right;color:#fff;font-weight:bold">2 048.0</div>
<div style="left:328px;top:665px;width:110px;height:24px;border-radius:2px;background:linear-gradient(#ededed,#d8d8d8 60%,#cbcbcb)"></div>
<div style="right:1363px;top:668.38px;font-size:15.5px;line-height:15.5px;font-family:'Liberation Sans',sans-serif;white-space:nowrap;text-align:right;color:#0d6fd0;font-weight:bold">496.61</div>
<div style="left:441px;top:665px;width:108px;height:24px;border-radius:2px;background:linear-gradient(#1d55b2,#1a68d6 50%,#1a76e6)"></div>
<div style="right:1252px;top:668.38px;font-size:15.5px;line-height:15.5px;font-family:'Liberation Sans',sans-serif;white-space:nowrap;text-align:right;color:#fff;font-weight:bold">1 986.42</div>
<div style="left:23px;top:691px;width:88px;height:24px;border:1px solid #c8c8c8;border-radius:2px;background:linear-gradient(#fafafa,#e6e6e6)"></div>
<div style="left:23.0px;width:88px;top:696.69px;font-size:11px;line-height:11px;font-family:'Liberation Sans',sans-serif;white-space:nowrap;text-align:center;color:#222;letter-spacing:-0.2px">4K</div>
<div style="left:114px;top:691px;width:110px;height:24px;border-radius:2px;background:linear-gradient(#4a8ff0,#2ea8f5 50%,#22b8f8)"></div>
<div style="right:1577px;top:694.38px;font-size:15.5px;line-height:15.5px;font-family:'Liberation Sans',sans-serif;white-space:nowrap;text-align:right;color:#fff;font-weight:bold">0.0997ms</div>
<div style="left:227px;top:691px;width:98px;height:24px;border-radius:2px;background:linear-gradient(#4a8ff0,#2ea8f5 50%,#22b8f8)"></div>
<div style="right:1476px;top:694.38px;font-size:15.5px;line-height:15.5px;font-family:'Liberation Sans',sans-serif;white-space:nowrap;text-align:right;color:#fff;font-weight:bold">489.9</div>
<div style="left:328px;top:691px;width:110px;height:24px;border-radius:2px;background:linear-gradient(#ededed,#d8d8d8 60%,#cbcbcb)"></div>
<div style="right:1363px;top:694.38px;font-size:15.5px;line-height:15.5px;font-family:'Liberation Sans',sans-serif;white-space:nowrap;text-align:right;color:#0d6fd0;font-weight:bold">10 033.90</div>
<div style="left:441px;top:691px;width:108px;height:24px;border-radius:2px;background:linear-gradient(#1d55b2,#1a68d6 50%,#1a76e6)"></div>
<div style="right:1252px;top:694.38px;font-size:15.5px;line-height:15.5px;font-family:'Liberation Sans',sans-serif;white-space:nowrap;text-align:right;color:#fff;font-weight:bold">39.19</div>
<div style="left:23px;top:717px;width:88px;height:24px;border:1px solid #c8c8c8;border-radius:2px;background:linear-gradient(#fafafa,#e6e6e6)"></div>
<div style="left:23.0px;width:88px;top:722.69px;font-size:11px;line-height:11px;font-family:'Liberation Sans',sans-serif;white-space:nowrap;text-align:center;color:#222;letter-spacing:-0.2px">4K QD4</div>
<div style="left:114px;top:717px;width:110px;height:24px;border-radius:2px;background:linear-gradient(#4a8ff0,#2ea8f5 50%,#22b8f8)"></div>
<div style="right:1577px;top:720.38px;font-size:15.5px;line-height:15.5px;font-family:'Liberation Sans',sans-serif;white-space:nowrap;text-align:right;color:#fff;font-weight:bold">0.0885ms</div>
<div style="left:227px;top:717px;width:98px;height:24px;border-radius:2px;background:linear-gradient(#4a8ff0,#2ea8f5 50%,#22b8f8)"></div>
<div style="right:1476px;top:720.38px;font-size:15.5px;line-height:15.5px;font-family:'Liberation Sans',sans-serif;white-space:nowrap;text-align:right;color:#fff;font-weight:bold">2 207.9</div>
<div style="left:328px;top:717px;width:110px;height:24px;border-radius:2px;background:linear-gradient(#ededed,#d8d8d8 60%,#cbcbcb)"></div>
<div style="right:1363px;top:720.38px;font-size:15.5px;line-height:15.5px;font-family:'Liberation Sans',sans-serif;white-space:nowrap;text-align:right;color:#0d6fd0;font-weight:bold">45 218.50</div>
<div style="left:441px;top:717px;width:108px;height:24px;border-radius:2px;background:linear-gradient(#1d55b2,#1a68d6 50%,#1a76e6)"></div>
<div style="right:1252px;top:720.38px;font-size:15.5px;line-height:15.5px;font-family:'Liberation Sans',sans-serif;white-space:nowrap;text-align:right;color:#fff;font-weight:bold">176.63</div>
<div style="left:23px;top:743px;width:88px;height:24px;border:1px solid #c8c8c8;border-radius:2px;background:linear-gradient(#fafafa,#e6e6e6)"></div>
<div style="left:23.0px;width:88px;top:748.69px;font-size:11px;line-height:11px;font-family:'Liberation Sans',sans-serif;white-space:nowrap;text-align:center;color:#222;letter-spacing:-0.2px">4K QD16</div>
<div style="left:114px;top:743px;width:110px;height:24px;border-radius:2px;background:linear-gradient(#4a8ff0,#2ea8f5 50%,#22b8f8)"></div>
<div style="right:1577px;top:746.38px;font-size:15.5px;line-height:15.5px;font-family:'Liberation Sans',sans-serif;white-space:nowrap;text-align:right;color:#fff;font-weight:bold">0.1012ms</div>
<div style="left:227px;top:743px;width:98px;height:24px;border-radius:2px;background:linear-gradient(#4a8ff0,#2ea8f5 50%,#22b8f8)"></div>
<div style="right:1476px;top:746.38px;font-size:15.5px;line-height:15.5px;font-family:'Liberation Sans',sans-serif;white-space:nowrap;text-align:right;color:#fff;font-weight:bold">7 717.4</div>
<div style="left:328px;top:743px;width:110px;height:24px;border-radius:2px;background:linear-gradient(#ededed,#d8d8d8 60%,#cbcbcb)"></div>
<div style="right:1363px;top:746.38px;font-size:15.5px;line-height:15.5px;font-family:'Liberation Sans',sans-serif;white-space:nowrap;text-align:right;color:#0d6fd0;font-weight:bold">158 051.76</div>
<div style="left:441px;top:743px;width:108px;height:24px;border-radius:2px;background:linear-gradient(#1d55b2,#1a68d6 50%,#1a76e6)"></div>
<div style="right:1252px;top:746.38px;font-size:15.5px;line-height:15.5px;font-family:'Liberation Sans',sans-serif;white-space:nowrap;text-align:right;color:#fff;font-weight:bold">617.39</div>
<div style="left:23px;top:769px;width:88px;height:24px;border:1px solid #c8c8c8;border-radius:2px;background:linear-gradient(#fafafa,#e6e6e6)"></div>
<div style="left:23.0px;width:88px;top:774.69px;font-size:11px;line-height:11px;font-family:'Liberation Sans',sans-serif;white-space:nowrap;text-align:center;color:#222;letter-spacing:-0.2px">32K</div>
<div style="left:114px;top:769px;width:110px;height:24px;border-radius:2px;background:linear-gradient(#4a8ff0,#2ea8f5 50%,#22b8f8)"></div>
<div style="right:1577px;top:772.38px;font-size:15.5px;line-height:15.5px;font-family:'Liberation Sans',sans-serif;white-space:nowrap;text-align:right;color:#fff;font-weight:bold">0.2127ms</div>
<div style="left:227px;top:769px;width:98px;height:24px;border-radius:2px;background:linear-gradient(#4a8ff0,#2ea8f5 50%,#22b8f8)"></div>
<div style="right:1476px;top:772.38px;font-size:15.5px;line-height:15.5px;font-family:'Liberation Sans',sans-serif;white-space:nowrap;text-align:right;color:#fff;font-weight:bold">2 206.6</div>
<div style="left:328px;top:769px;width:110px;height:24px;border-radius:2px;background:linear-gradient(#ededed,#d8d8d8 60%,#cbcbcb)"></div>
<div style="right:1363px;top:772.38px;font-size:15.5px;line-height:15.5px;font-family:'Liberation Sans',sans-serif;white-space:nowrap;text-align:right;color:#0d6fd0;font-weight:bold">4 702.38</div>
<div style="left:441px;top:769px;width:108px;height:24px;border-radius:2px;background:linear-gradient(#1d55b2,#1a68d6 50%,#1a76e6)"></div>
<div style="right:1252px;top:772.38px;font-size:15.5px;line-height:15.5px;font-family:'Liberation Sans',sans-serif;white-space:nowrap;text-align:right;color:#fff;font-weight:bold">146.95</div>
<div style="left:23px;top:795px;width:88px;height:24px;border:1px solid #c8c8c8;border-radius:2px;background:linear-gradient(#fafafa,#e6e6e6)"></div>
<div style="left:23.0px;width:88px;top:800.69px;font-size:11px;line-height:11px;font-family:'Liberation Sans',sans-serif;white-space:nowrap;text-align:center;color:#222;letter-spacing:-0.2px">128K</div>
<div style="left:114px;top:795px;width:110px;height:24px;border-radius:2px;background:linear-gradient(#4a8ff0,#2ea8f5 50%,#22b8f8)"></div>
<div style="right:1577px;top:798.38px;font-size:15.5px;line-height:15.5px;font-family:'Liberation Sans',sans-serif;white-space:nowrap;text-align:right;color:#fff;font-weight:bold">0.2793ms</div>
<div style="left:227px;top:795px;width:98px;height:24px;border-radius:2px;background:linear-gradient(#4a8ff0,#2ea8f5 50%,#22b8f8)"></div>
<div style="right:1476px;top:798.38px;font-size:15.5px;line-height:15.5px;font-family:'Liberation Sans',sans-serif;white-space:nowrap;text-align:right;color:#fff;font-weight:bold">6 720.5</div>
<div style="left:328px;top:795px;width:110px;height:24px;border-radius:2px;background:linear-gradient(#ededed,#d8d8d8 60%,#cbcbcb)"></div>
<div style="right:1363px;top:798.38px;font-size:15.5px;line-height:15.5px;font-family:'Liberation Sans',sans-serif;white-space:nowrap;text-align:right;color:#0d6fd0;font-weight:bold">3 580.69</div>
<div style="left:441px;top:795px;width:108px;height:24px;border-radius:2px;background:linear-gradient(#1d55b2,#1a68d6 50%,#1a76e6)"></div>
<div style="right:1252px;top:798.38px;font-size:15.5px;line-height:15.5px;font-family:'Liberation Sans',sans-serif;white-space:nowrap;text-align:right;color:#fff;font-weight:bold">447.59</div>
<div style="left:23px;top:830px;width:88px;height:22px;border-radius:2px;background:linear-gradient(#7a7a7a,#4c4c4c 50%,#363636)"></div>
<div style="right:1689px;top:832.93px;font-size:14.5px;line-height:14.5px;font-family:'Liberation Sans',sans-serif;white-space:nowrap;text-align:right;color:#e8e8e8">Write</div>
<div style="left:114px;top:830px;width:110px;height:22px;border-radius:2px;background:linear-gradient(#7a7a7a,#4c4c4c 50%,#363636)"></div>
<div style="right:1576px;top:832.93px;font-size:14.5px;line-height:14.5px;font-family:'Liberation Sans',sans-serif;white-space:nowrap;text-align:right;color:#e8e8e8">Resp. time</div>
<div style="left:227px;top:830px;width:98px;height:22px;border-radius:2px;background:linear-gradient(#7a7a7a,#4c4c4c 50%,#363636)"></div>
<div style="right:1475px;top:832.93px;font-size:14.5px;line-height:14.5px;font-family:'Liberation Sans',sans-serif;white-space:nowrap;text-align:right;color:#e8e8e8">MB written</div>
<div style="left:328px;top:830px;width:110px;height:22px;border-radius:2px;background:linear-gradient(#7a7a7a,#4c4c4c 50%,#363636)"></div>
<div style="right:1362px;top:832.93px;font-size:14.5px;line-height:14.5px;font-family:'Liberation Sans',sans-serif;white-space:nowrap;text-align:right;color:#e8e8e8">IOPS</div>
<div style="left:441px;top:830px;width:108px;height:22px;border-radius:2px;background:linear-gradient(#7a7a7a,#4c4c4c 50%,#363636)"></div>
<div style="right:1251px;top:832.93px;font-size:14.5px;line-height:14.5px;font-family:'Liberation Sans',sans-serif;white-space:nowrap;text-align:right;color:#e8e8e8">MB/s</div>
<div style="left:23px;top:855px;width:88px;height:24px;border:1px solid #c8c8c8;border-radius:2px;background:linear-gradient(#fafafa,#e6e6e6)"></div>
<div style="left:23.0px;width:88px;top:860.69px;font-size:11px;line-height:11px;font-family:'Liberation Sans',sans-serif;white-space:nowrap;text-align:center;color:#222;letter-spacing:-0.2px">Seq 4MB</div>
<div style="left:114px;top:855px;width:110px;height:24px;border-radius:2px;background:linear-gradient(#4a8ff0,#2ea8f5 50%,#22b8f8)"></div>
<div style="right:1577px;top:858.38px;font-size:15.5px;line-height:15.5px;font-family:'Liberation Sans',sans-serif;white-space:nowrap;text-align:right;color:#fff;font-weight:bold">1.7695ms</div>
<div style="left:227px;top:855px;width:98px;height:24px;border-radius:2px;background:linear-gradient(#4a8ff0,#2ea8f5 50%,#22b8f8)"></div>
<div style="right:1476px;top:858.38px;font-size:15.5px;line-height:15.5px;font-family:'Liberation Sans',sans-serif;white-space:nowrap;text-align:right;color:#fff;font-weight:bold">1 024.0</div>
<div style="left:328px;top:855px;width:110px;height:24px;border-radius:2px;background:linear-gradient(#ededed,#d8d8d8 60%,#cbcbcb)"></div>
<div style="right:1363px;top:858.38px;font-size:15.5px;line-height:15.5px;font-family:'Liberation Sans',sans-serif;white-space:nowrap;text-align:right;color:#0d6fd0;font-weight:bold">565.12</div>
<div style="left:441px;top:855px;width:108px;height:24px;border-radius:2px;background:linear-gradient(#1d55b2,#1a68d6 50%,#1a76e6)"></div>
<div style="right:1252px;top:858.38px;font-size:15.5px;line-height:15.5px;font-family:'Liberation Sans',sans-serif;white-space:nowrap;text-align:right;color:#fff;font-weight:bold">2 260.49</div>
<div style="left:23px;top:881px;width:88px;height:24px;border:1px solid #c8c8c8;border-radius:2px;background:linear-gradient(#fafafa,#e6e6e6)"></div>
<div style="left:23.0px;width:88px;top:886.69px;font-size:11px;line-height:11px;font-family:'Liberation Sans',sans-serif;white-space:nowrap;text-align:center;color:#222;letter-spacing:-0.2px">4K</div>
<div style="left:114px;top:881px;width:110px;height:24px;border-radius:2px;background:linear-gradient(#4a8ff0,#2ea8f5 50%,#22b8f8)"></div>
<div style="right:1577px;top:884.38px;font-size:15.5px;line-height:15.5px;font-family:'Liberation Sans',sans-serif;white-space:nowrap;text-align:right;color:#fff;font-weight:bold">0.0351ms</div>
<div style="left:227px;top:881px;width:98px;height:24px;border-radius:2px;background:linear-gradient(#4a8ff0,#2ea8f5 50%,#22b8f8)"></div>
<div style="right:1476px;top:884.38px;font-size:15.5px;line-height:15.5px;font-family:'Liberation Sans',sans-serif;white-space:nowrap;text-align:right;color:#fff;font-weight:bold">640.0</div>
<div style="left:328px;top:881px;width:110px;height:24px;border-radius:2px;background:linear-gradient(#ededed,#d8d8d8 60%,#cbcbcb)"></div>
<div style="right:1363px;top:884.38px;font-size:15.5px;line-height:15.5px;font-family:'Liberation Sans',sans-serif;white-space:nowrap;text-align:right;color:#0d6fd0;font-weight:bold">28 518.08</div>
<div style="left:441px;top:881px;width:108px;height:24px;border-radius:2px;background:linear-gradient(#1d55b2,#1a68d6 50%,#1a76e6)"></div>
<div style="right:1252px;top:884.38px;font-size:15.5px;line-height:15.5px;font-family:'Liberation Sans',sans-serif;white-space:nowrap;text-align:right;color:#fff;font-weight:bold">111.40</div>
<div style="left:23px;top:907px;width:88px;height:24px;border:1px solid #c8c8c8;border-radius:2px;background:linear-gradient(#fafafa,#e6e6e6)"></div>
<div style="left:23.0px;width:88px;top:912.69px;font-size:11px;line-height:11px;font-family:'Liberation Sans',sans-serif;white-space:nowrap;text-align:center;color:#222;letter-spacing:-0.2px">4K QD4</div>
<div style="left:114px;top:907px;width:110px;height:24px;border-radius:2px;background:linear-gradient(#4a8ff0,#2ea8f5 50%,#22b8f8)"></div>
<div style="right:1577px;top:910.38px;font-size:15.5px;line-height:15.5px;font-family:'Liberation Sans',sans-serif;white-space:nowrap;text-align:right;color:#fff;font-weight:bold">0.0305ms</div>
<div style="left:227px;top:907px;width:98px;height:24px;border-radius:2px;background:linear-gradient(#4a8ff0,#2ea8f5 50%,#22b8f8)"></div>
<div style="right:1476px;top:910.38px;font-size:15.5px;line-height:15.5px;font-family:'Liberation Sans',sans-serif;white-space:nowrap;text-align:right;color:#fff;font-weight:bold">640.0</div>
<div style="left:328px;top:907px;width:110px;height:24px;border-radius:2px;background:linear-gradient(#ededed,#d8d8d8 60%,#cbcbcb)"></div>
<div style="right:1363px;top:910.38px;font-size:15.5px;line-height:15.5px;font-family:'Liberation Sans',sans-serif;white-space:nowrap;text-align:right;color:#0d6fd0;font-weight:bold">131 344.20</div>
<div style="left:441px;top:907px;width:108px;height:24px;border-radius:2px;background:linear-gradient(#1d55b2,#1a68d6 50%,#1a76e6)"></div>
<div style="right:1252px;top:910.38px;font-size:15.5px;line-height:15.5px;font-family:'Liberation Sans',sans-serif;white-space:nowrap;text-align:right;color:#fff;font-weight:bold">513.06</div>
<div style="left:23px;top:933px;width:88px;height:24px;border:1px solid #c8c8c8;border-radius:2px;background:linear-gradient(#fafafa,#e6e6e6)"></div>
<div style="left:23.0px;width:88px;top:938.69px;font-size:11px;line-height:11px;font-family:'Liberation Sans',sans-serif;white-space:nowrap;text-align:center;color:#222;letter-spacing:-0.2px">4K QD16</div>
<div style="left:114px;top:933px;width:110px;height:24px;border-radius:2px;background:linear-gradient(#4a8ff0,#2ea8f5 50%,#22b8f8)"></div>
<div style="right:1577px;top:936.38px;font-size:15.5px;line-height:15.5px;font-family:'Liberation Sans',sans-serif;white-space:nowrap;text-align:right;color:#fff;font-weight:bold">0.0493ms</div>
<div style="left:227px;top:933px;width:98px;height:24px;border-radius:2px;background:linear-gradient(#4a8ff0,#2ea8f5 50%,#22b8f8)"></div>
<div style="right:1476px;top:936.38px;font-size:15.5px;line-height:15.5px;font-family:'Liberation Sans',sans-serif;white-space:nowrap;text-align:right;color:#fff;font-weight:bold">640.0</div>
<div style="left:328px;top:933px;width:110px;height:24px;border-radius:2px;background:linear-gradient(#ededed,#d8d8d8 60%,#cbcbcb)"></div>
<div style="right:1363px;top:936.38px;font-size:15.5px;line-height:15.5px;font-family:'Liberation Sans',sans-serif;white-space:nowrap;text-align:right;color:#0d6fd0;font-weight:bold">324 960.33</div>
<div style="left:441px;top:933px;width:108px;height:24px;border-radius:2px;background:linear-gradient(#1d55b2,#1a68d6 50%,#1a76e6)"></div>
<div style="right:1252px;top:936.38px;font-size:15.5px;line-height:15.5px;font-family:'Liberation Sans',sans-serif;white-space:nowrap;text-align:right;color:#fff;font-weight:bold">1 269.38</div>
<div style="left:560px;top:740px;width:60px;height:25px;border:1px solid #b8b8b8;border-radius:3px;background:linear-gradient(#fbfbfb,#e2e2e2);"></div>
<div style="left:560.0px;width:60px;top:746.27px;font-size:11.5px;line-height:11.5px;font-family:'Liberation Sans',sans-serif;white-space:nowrap;text-align:center;color:#222;letter-spacing:-0.3px">Run read</div>
<div style="left:560px;top:805px;width:60px;height:40px;border:1px solid #b8b8b8;border-radius:3px;background:linear-gradient(#fbfbfb,#e2e2e2);background:linear-gradient(#bdbdbd,#9a9a9a);border-color:#8a8a8a"></div>
<div style="left:560.0px;width:60px;top:813.38px;font-size:22px;line-height:22px;font-family:'Liberation Sans',sans-serif;white-space:nowrap;text-align:center;color:#333;font-weight:bold">Run</div>
<div style="left:560px;top:892px;width:60px;height:26px;border:1px solid #b8b8b8;border-radius:3px;background:linear-gradient(#fbfbfb,#e2e2e2);"></div>
<div style="left:560.0px;width:60px;top:899.27px;font-size:11.5px;line-height:11.5px;font-family:'Liberation Sans',sans-serif;white-space:nowrap;text-align:center;color:#222;letter-spacing:-0.3px">Run write</div>
<div style="left:636px;top:728px;width:109px;height:43px;border-radius:3px;background:linear-gradient(#2060b8,#1a70d8 60%,#1a78e4)"></div>
<div style="left:638px;top:731.27px;font-size:11.5px;line-height:11.5px;font-family:'Liberation Sans',sans-serif;white-space:nowrap;color:#fff">4 547.30</div>
<div style="right:1054px;top:739.92px;font-size:19px;line-height:19px;font-family:'Liberation Sans',sans-serif;white-space:nowrap;text-align:right;color:#fff">4 547.30</div>
<div style="left:686px;top:800px;width:123px;height:48px;border-radius:4px;background:radial-gradient(ellipse at 55% 100%,#f07e10 0,#f5a040 40%,#f9c686 100%)"></div>
<div style="left:688px;top:802.42px;font-size:12.5px;line-height:12.5px;font-family:'Liberation Sans',sans-serif;white-space:nowrap;color:#111;font-weight:bold">12 600.70</div>
<div style="right:992px;top:812.22px;font-size:21px;line-height:21px;font-family:'Liberation Sans',sans-serif;white-space:nowrap;text-align:right;color:#123a78;font-weight:bold">12 600.70</div>
<div style="left:636px;top:882px;width:109px;height:45px;border-radius:3px;background:linear-gradient(#1f5cb0,#1a6ed4 60%,#1a76e0)"></div>
<div style="left:638px;top:885.27px;font-size:11.5px;line-height:11.5px;font-family:'Liberation Sans',sans-serif;white-space:nowrap;color:#fff">8 053.40</div>
<div style="right:1054px;top:893.92px;font-size:19px;line-height:19px;font-family:'Liberation Sans',sans-serif;white-space:nowrap;text-align:right;color:#fff">8 053.40</div>
<div style="left:6px;top:983px;width:839px;height:111px;background:#333333"></div>
<div style="left:21px;top:991.77px;font-size:11.5px;line-height:11.5px;font-family:'Liberation Sans',sans-serif;white-space:nowrap;color:#d8d8d8;letter-spacing:-0.3px">Майкрософт Windows 10 Домашняя для одного языка 64-разрядная</div>
<div style="left:21px;top:1008.77px;font-size:11.5px;line-height:11.5px;font-family:'Liberation Sans',sans-serif;white-space:nowrap;color:#d8d8d8;letter-spacing:-0.75px">MACHD-WXX9-PCB/1.13, CPU0</div>
<div style="left:21px;top:1025.27px;font-size:11.5px;line-height:11.5px;font-family:'Liberation Sans',sans-serif;white-space:nowrap;color:#d8d8d8;letter-spacing:-0.35px">11th Gen Intel(R) Core(TM) i7-1165G7 @ 2.80GHz</div>
<div style="left:21px;top:1042.77px;font-size:11.5px;line-height:11.5px;font-family:'Liberation Sans',sans-serif;white-space:nowrap;color:#d8d8d8;letter-spacing:-0.45px">Memory : 16 183 MB</div>
<div style="left:23px;top:1063.00px;font-size:13px;line-height:13px;font-family:'Liberation Sans',sans-serif;white-space:nowrap;color:#1e8ff0;font-weight:bold">Professional Edition</div>
<div style="left:328px;top:991px;width:292px;height:95px;border-radius:7px;background:#fff"></div>
<div style="left:6px;top:983px;width:321px;height:111px;overflow:hidden"></div>
<div style="left:340px;top:1001.80px;font-size:15px;line-height:15px;font-family:'Liberation Sans',sans-serif;white-space:nowrap;color:#3a8de0">Drives :</div>
<div style="left:340px;top:1023.30px;font-size:15px;line-height:15px;font-family:'Liberation Sans',sans-serif;white-space:nowrap;color:#3a8de0">Notes :</div>
<div style="left:627px;top:988px;width:218px;height:20px;overflow:hidden;white-space:nowrap;font-size:11.5px;line-height:14px;color:#e0e0e0;font-weight:bold">SAMSUNG MZVLB1T0HBLR-00000 1024GB</div>
<div style="left:627px;top:1003.77px;font-size:11.5px;line-height:11.5px;font-family:'Liberation Sans',sans-serif;white-space:nowrap;color:#d4d4d4;letter-spacing:-0.2px">Drive D: 818.2/761.0GB free (93.0%)</div>
<div style="left:627px;top:1017.77px;font-size:11.5px;line-height:11.5px;font-family:'Liberation Sans',sans-serif;white-space:nowrap;color:#d4d4d4;letter-spacing:-0.65px">NTFS - Cluster size 4096B</div>
<div style="left:625px;top:1059.27px;font-size:11.5px;line-height:11.5px;font-family:'Liberation Sans',sans-serif;white-space:nowrap;color:#d4d4d4;letter-spacing:-0.6px">Alignment 222208KB OK</div>
<div style="left:625px;top:1073.27px;font-size:11.5px;line-height:11.5px;font-family:'Liberation Sans',sans-serif;white-space:nowrap;color:#d4d4d4;letter-spacing:-0.45px">Compression 100% (Incompressible)</div>
<div style="left:627px;top:1031.77px;font-size:11.5px;line-height:11.5px;font-family:'Liberation Sans',sans-serif;white-space:nowrap;color:#d4d4d4;letter-spacing:0px">Storage driver &nbsp;<b>stornvme</b></div>
<div style="left:853px;top:749px;width:682px;height:351px;border:1px solid #6b5e48;background:#fff"></div>
<svg style="position:absolute;left:861px;top:756px" width="16" height="16"><path d="M0 0H16V3.5H12.5V7H0Z" fill="#3cc020"/><rect x="2" y="1" width="8" height="1.5" fill="#8ee070"/><rect x="0.5" y="8.5" width="15" height="7" rx="1" fill="#d8d8de" stroke="#8a8a8a"/><rect x="12" y="10.5" width="2" height="3" fill="#3cc020"/></svg>
<div style="left:881px;top:759.42px;font-size:12.5px;line-height:12.5px;font-family:'Liberation Sans',sans-serif;white-space:nowrap;color:#000;letter-spacing:-0.4px">CrystalDiskMark 8.0.1 x64 [Admin]</div>
<div style="left:1411px;top:764px;width:10px;height:1px;background:#000"></div>
<div style="left:1458px;top:759px;width:10px;height:10px;border:1px solid #c8c8c8;box-sizing:border-box"></div>
<svg style="position:absolute;left:1505px;top:759px" width="11" height="11"><path d="M0.5 0.5L10.5 10.5M10.5 0.5L0.5 10.5" stroke="#000" stroke-width="1.1"/></svg>
<div style="left:860px;top:784.42px;font-size:12.5px;line-height:12.5px;font-family:'Liberation Sans',sans-serif;white-space:nowrap;color:#111;letter-spacing:-0.2px">Файл</div>
<div style="left:900px;top:784.42px;font-size:12.5px;line-height:12.5px;font-family:'Liberation Sans',sans-serif;white-space:nowrap;color:#111;letter-spacing:-0.2px">Настройки</div>
<div style="left:971px;top:784.42px;font-size:12.5px;line-height:12.5px;font-family:'Liberation Sans',sans-serif;white-space:nowrap;color:#111;letter-spacing:-0.2px">Профиль</div>
<div style="left:1034px;top:784.42px;font-size:12.5px;line-height:12.5px;font-family:'Liberation Sans',sans-serif;white-space:nowrap;color:#111;letter-spacing:-0.2px">Вид</div>
<div style="left:1065px;top:784.42px;font-size:12.5px;line-height:12.5px;font-family:'Liberation Sans',sans-serif;white-space:nowrap;color:#111;letter-spacing:-0.2px">Справка</div>
<div style="left:1123px;top:784.42px;font-size:12.5px;line-height:12.5px;font-family:'Liberation Sans',sans-serif;white-space:nowrap;color:#111;letter-spacing:-0.2px">Язык(Language)</div>
<div style="left:854px;top:799px;width:680px;height:300px;background:#1f1f1f"></div>
<div style="left:862px;top:808px;width:72px;height:47px;background:#333;border:1px solid #464646"></div>
<div style="left:862.0px;width:72px;top:824.61px;font-size:17px;line-height:17px;font-family:'Liberation Sans',sans-serif;white-space:nowrap;text-align:center;color:#fff;font-weight:bold">All</div>
<svg style="position:absolute;left:925px;top:846px" width="9" height="9"><path d="M9 0V9H0Z" fill="#eee"/></svg>
<div style="left:938px;top:808px;width:39px;height:23px;background:#fff"></div>
<div style="left:940px;top:810px;width:19px;height:19px;background:#1f1f1f"></div>
<div style="left:944.5px;top:813.30px;font-size:15px;line-height:15px;font-family:'Liberation Sans',sans-serif;white-space:nowrap;color:#fff">5</div>
<svg style="position:absolute;left:963.5px;top:817px" width="9" height="6"><path d="M0.5 0.5L4.5 4.5L8.5 0.5" stroke="#555" fill="none"/></svg>
<div style="left:982px;top:808px;width:80px;height:23px;background:#fff"></div>
<div style="left:984px;top:810px;width:59px;height:19px;background:#1f1f1f"></div>
<div style="left:988.5px;top:813.30px;font-size:15px;line-height:15px;font-family:'Liberation Sans',sans-serif;white-space:nowrap;color:#fff">1GiB</div>
<svg style="position:absolute;left:1048.0px;top:817px" width="9" height="6"><path d="M0.5 0.5L4.5 4.5L8.5 0.5" stroke="#555" fill="none"/></svg>
<div style="left:1066px;top:808px;width:260px;height:23px;background:#fff"></div>
<div style="left:1068px;top:810px;width:239px;height:19px;background:#1f1f1f"></div>
<div style="left:1072.5px;top:813.30px;font-size:15px;line-height:15px;font-family:'Liberation Sans',sans-serif;white-space:nowrap;color:#fff">C: 60% (72/120GiB)</div>
<svg style="position:absolute;left:1312.0px;top:817px" width="9" height="6"><path d="M0.5 0.5L4.5 4.5L8.5 0.5" stroke="#555" fill="none"/></svg>
<div style="left:1334px;top:808px;width:192px;height:23px;background:#fff"></div>
<div style="left:1336px;top:810px;width:171px;height:19px;background:#1f1f1f"></div>
<div style="left:1340.5px;top:813.30px;font-size:15px;line-height:15px;font-family:'Liberation Sans',sans-serif;white-space:nowrap;color:#fff">R70%/W30%</div>
<svg style="position:absolute;left:1512.0px;top:817px" width="9" height="6"><path d="M0.5 0.5L4.5 4.5L8.5 0.5" stroke="#555" fill="none"/></svg>
<div style="left:938.0px;width:190px;top:841.96px;font-size:16px;line-height:16px;font-family:'Liberation Sans',sans-serif;white-space:nowrap;text-align:center;color:#fff;font-weight:bold">Read (MB/s)</div>
<div style="left:1134.0px;width:190px;top:841.96px;font-size:16px;line-height:16px;font-family:'Liberation Sans',sans-serif;white-space:nowrap;text-align:center;color:#fff;font-weight:bold">Write (MB/s)</div>
<div style="left:1335.0px;width:190px;top:841.96px;font-size:16px;line-height:16px;font-family:'Liberation Sans',sans-serif;white-space:nowrap;text-align:center;color:#fff;font-weight:bold">Mix (MB/s)</div>
<div style="left:862px;top:859px;width:72px;height:48px;background:#1f1f1f;border:1px solid #464646"></div>
<div style="left:862.0px;width:72px;top:867.84px;font-size:12px;line-height:12px;font-family:'Liberation Sans',sans-serif;white-space:nowrap;text-align:center;color:#fff;font-weight:bold;letter-spacing:-0.3px">SEQ1M</div>
<div style="left:862.0px;width:72px;top:887.84px;font-size:12px;line-height:12px;font-family:'Liberation Sans',sans-serif;white-space:nowrap;text-align:center;color:#fff;font-weight:bold;letter-spacing:-0.3px">Q1T1</div>
<div style="left:938px;top:859px;width:192px;height:48px;background:#1f1f1f;border:1px solid #464646"></div>
<div style="left:939px;top:860px;width:136px;height:46px;background:#333333"></div>
<div style="right:670px;top:865.88px;font-size:37px;line-height:37px;font-family:'Liberation Sans',sans-serif;white-space:nowrap;text-align:right;color:#fff;font-weight:bold;letter-spacing:-0.75px">1904.96</div>
<div style="left:1134px;top:859px;width:192px;height:48px;background:#1f1f1f;border:1px solid #464646"></div>
<div style="left:1135px;top:860px;width:137px;height:46px;background:#333333"></div>
<div style="right:474px;top:865.88px;font-size:37px;line-height:37px;font-family:'Liberation Sans',sans-serif;white-space:nowrap;text-align:right;color:#fff;font-weight:bold;letter-spacing:-0.75px">2083.61</div>
<div style="left:1334px;top:859px;width:192px;height:48px;background:#1f1f1f;border:1px solid #464646"></div>
<div style="left:1335px;top:860px;width:134px;height:46px;background:#333333"></div>
<div style="right:274px;top:865.88px;font-size:37px;line-height:37px;font-family:'Liberation Sans',sans-serif;white-space:nowrap;text-align:right;color:#fff;font-weight:bold;letter-spacing:-0.75px">1724.13</div>
<div style="left:862px;top:911px;width:72px;height:48px;background:#1f1f1f;border:1px solid #464646"></div>
<div style="left:862.0px;width:72px;top:919.84px;font-size:12px;line-height:12px;font-family:'Liberation Sans',sans-serif;white-space:nowrap;text-align:center;color:#fff;font-weight:bold;letter-spacing:-0.3px">RND4K</div>
<div style="left:862.0px;width:72px;top:939.84px;font-size:12px;line-height:12px;font-family:'Liberation Sans',sans-serif;white-space:nowrap;text-align:center;color:#fff;font-weight:bold;letter-spacing:-0.3px">Q1T1</div>
<div style="left:938px;top:911px;width:192px;height:48px;background:#1f1f1f;border:1px solid #464646"></div>
<div style="left:939px;top:912px;width:85px;height:46px;background:#333333"></div>
<div style="right:670px;top:917.88px;font-size:37px;line-height:37px;font-family:'Liberation Sans',sans-serif;white-space:nowrap;text-align:right;color:#fff;font-weight:bold;letter-spacing:-0.75px">50.42</div>
<div style="left:1134px;top:911px;width:192px;height:48px;background:#1f1f1f;border:1px solid #464646"></div>
<div style="left:1135px;top:912px;width:101px;height:46px;background:#333333"></div>
<div style="right:474px;top:917.88px;font-size:37px;line-height:37px;font-family:'Liberation Sans',sans-serif;white-space:nowrap;text-align:right;color:#fff;font-weight:bold;letter-spacing:-0.75px">150.69</div>
<div style="left:1334px;top:911px;width:192px;height:48px;background:#1f1f1f;border:1px solid #464646"></div>
<div style="left:1335px;top:912px;width:82px;height:46px;background:#333333"></div>
<div style="right:274px;top:917.88px;font-size:37px;line-height:37px;font-family:'Liberation Sans',sans-serif;white-space:nowrap;text-align:right;color:#fff;font-weight:bold;letter-spacing:-0.75px">42.07</div>
<div style="left:862px;top:963px;width:72px;height:48px;background:#1f1f1f;border:1px solid #464646"></div>
<div style="left:862.0px;width:72px;top:971.84px;font-size:12px;line-height:12px;font-family:'Liberation Sans',sans-serif;white-space:nowrap;text-align:center;color:#fff;font-weight:bold;letter-spacing:-0.3px">RND4K</div>
<div style="left:862.0px;width:72px;top:991.84px;font-size:12px;line-height:12px;font-family:'Liberation Sans',sans-serif;white-space:nowrap;text-align:center;color:#fff;font-weight:bold;letter-spacing:-0.3px">(IOPS)</div>
<div style="left:938px;top:963px;width:192px;height:48px;background:#1f1f1f;border:1px solid #464646"></div>
<div style="left:939px;top:964px;width:85px;height:46px;background:#333333"></div>
<div style="right:670px;top:969.88px;font-size:37px;line-height:37px;font-family:'Liberation Sans',sans-serif;white-space:nowrap;text-align:right;color:#fff;font-weight:bold;letter-spacing:-0.75px">12310.79</div>
<div style="left:1134px;top:963px;width:192px;height:48px;background:#1f1f1f;border:1px solid #464646"></div>
<div style="left:1135px;top:964px;width:101px;height:46px;background:#333333"></div>
<div style="right:474px;top:969.88px;font-size:37px;line-height:37px;font-family:'Liberation Sans',sans-serif;white-space:nowrap;text-align:right;color:#fff;font-weight:bold;letter-spacing:-0.75px">36789.55</div>
<div style="left:1334px;top:963px;width:192px;height:48px;background:#1f1f1f;border:1px solid #464646"></div>
<div style="left:1335px;top:964px;width:82px;height:46px;background:#333333"></div>
<div style="right:274px;top:969.88px;font-size:37px;line-height:37px;font-family:'Liberation Sans',sans-serif;white-space:nowrap;text-align:right;color:#fff;font-weight:bold;letter-spacing:-0.75px">10270.26</div>
<div style="left:862px;top:1015px;width:72px;height:48px;background:#1f1f1f;border:1px solid #464646"></div>
<div style="left:862.0px;width:72px;top:1023.84px;font-size:12px;line-height:12px;font-family:'Liberation Sans',sans-serif;white-space:nowrap;text-align:center;color:#fff;font-weight:bold;letter-spacing:-0.3px">RND4K</div>
<div style="left:862.0px;width:72px;top:1043.84px;font-size:12px;line-height:12px;font-family:'Liberation Sans',sans-serif;white-space:nowrap;text-align:center;color:#fff;font-weight:bold;letter-spacing:-0.3px">(μs)</div>
<div style="left:938px;top:1015px;width:192px;height:48px;background:#1f1f1f;border:1px solid #464646"></div>
<div style="left:939px;top:1016px;width:129px;height:46px;background:#333333"></div>
<div style="right:670px;top:1021.88px;font-size:37px;line-height:37px;font-family:'Liberation Sans',sans-serif;white-space:nowrap;text-align:right;color:#fff;font-weight:bold;letter-spacing:-0.75px">81.09</div>
<div style="left:1134px;top:1015px;width:192px;height:48px;background:#1f1f1f;border:1px solid #464646"></div>
<div style="left:1135px;top:1016px;width:144px;height:46px;background:#333333"></div>
<div style="right:474px;top:1021.88px;font-size:37px;line-height:37px;font-family:'Liberation Sans',sans-serif;white-space:nowrap;text-align:right;color:#fff;font-weight:bold;letter-spacing:-0.75px">27.06</div>
<div style="left:1334px;top:1015px;width:192px;height:48px;background:#1f1f1f;border:1px solid #464646"></div>
<div style="left:1335px;top:1016px;width:127px;height:46px;background:#333333"></div>
<div style="right:274px;top:1021.88px;font-size:37px;line-height:37px;font-family:'Liberation Sans',sans-serif;white-space:nowrap;text-align:right;color:#fff;font-weight:bold;letter-spacing:-0.75px">96.93</div>
<div style="left:862px;top:1067px;width:664px;height:24px;background:#1f1f1f;border:1px solid #464646"></div>
</body></html>
